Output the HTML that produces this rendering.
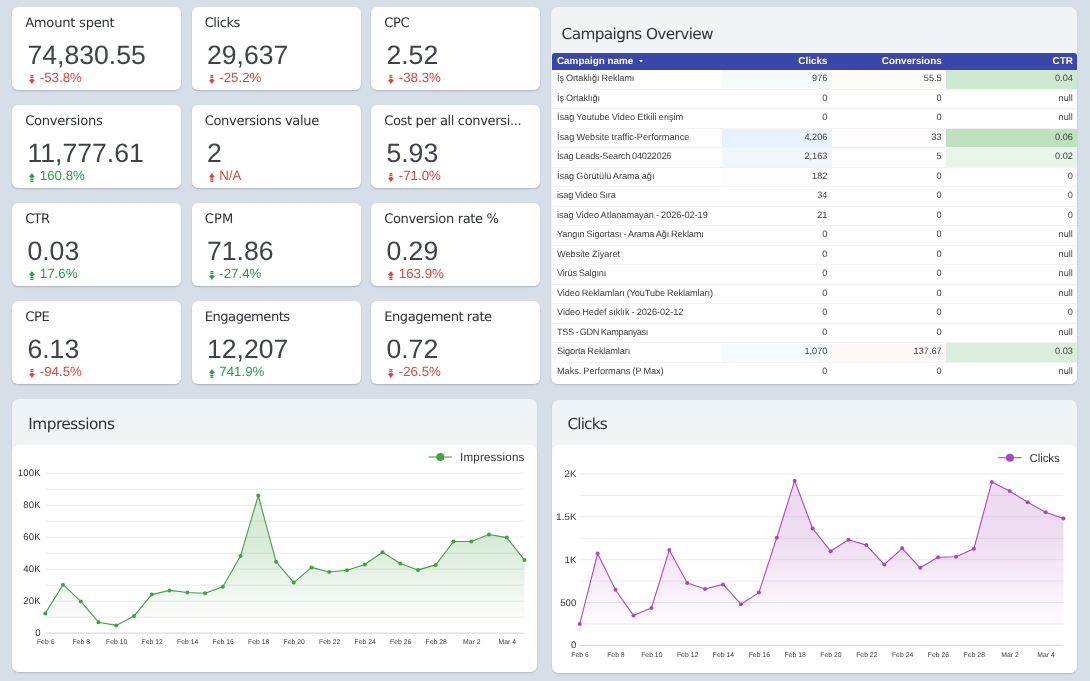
<!DOCTYPE html><html lang="tr"><head><meta charset="utf-8"><title>Campaigns dashboard</title><style>
*{box-sizing:border-box;margin:0;padding:0}
html,body{width:1090px;height:681px;overflow:hidden;background:#d6dee8;font-family:"Liberation Sans",sans-serif;text-rendering:geometricPrecision}
#root{position:absolute;left:0;top:0;width:1090px;height:681px;will-change:transform}
.abs{position:absolute}
.card{position:absolute;background:#fff;border-radius:6px;box-shadow:0 1px 1.5px rgba(70,76,88,.3)}
.kt{position:absolute;left:12.9px;top:8.5px;font-family:"DejaVu Sans",sans-serif;font-size:13.1px;line-height:16px;color:#2e3136;white-space:nowrap;letter-spacing:-.27px}
.kv{position:absolute;left:15.2px;top:33.3px;font-size:26.6px;line-height:30px;color:#3f4348;white-space:nowrap}
.kd{position:absolute;left:27.5px;top:63px;font-size:13.3px;line-height:15px;white-space:nowrap}
.ar{position:absolute;left:17.1px;top:67.8px;width:5.8px;height:8.3px}
.red{color:#dc463b;fill:#dc463b}
.green{color:#2f9e48;fill:#2f9e48}
.panel{position:absolute;background:#f0f4f7;border-radius:7px;box-shadow:0 1px 1.5px rgba(70,76,88,.26)}
.pt{position:absolute;font-family:"DejaVu Sans",sans-serif;font-size:15.3px;line-height:20px;color:#2e3136;white-space:nowrap;letter-spacing:-.62px}
.plot{position:absolute;background:#fff;border-radius:7px}
.th{position:absolute;background:#3b47a8;border-radius:3px 3px 0 0;color:#fff;font-weight:bold;font-size:9.9px;line-height:17.8px}
.th span{position:absolute;top:0;white-space:nowrap}
.tr{position:absolute;left:0;width:100%;background:#fff;border-bottom:1px solid #f1f3f5;font-size:9.2px;word-spacing:-.4px;color:#3c3c3c}
.tr span{position:absolute;top:0;white-space:nowrap}
.cell{position:absolute;top:0;height:100%}
svg text{font-family:"Liberation Sans",sans-serif}
</style></head><body><div id="root">
<div class="card" style="left:12.25px;top:7.00px;width:168.75px;height:83px"><div class="kt" style="letter-spacing:-0.24px">Amount spent</div><div class="kv">74,830.55</div><svg class="ar red" style="top:67.5px;height:9px" viewBox="0 0 7 9" preserveAspectRatio="none"><path d="M1.6 0 H5.4 V1.4 H1.6 Z M1.6 2 H5.4 V3.3 H1.6 Z M1.6 3.9 H5.4 V5.1 H7 L3.5 9 L0 5.1 H1.6 Z"/></svg><div class="kd red">-53.8%</div></div>
<div class="card" style="left:191.75px;top:7.00px;width:168.75px;height:83px"><div class="kt" style="letter-spacing:-0.455px">Clicks</div><div class="kv">29,637</div><svg class="ar red" style="top:67.5px;height:9px" viewBox="0 0 7 9" preserveAspectRatio="none"><path d="M1.6 0 H5.4 V1.4 H1.6 Z M1.6 2 H5.4 V3.3 H1.6 Z M1.6 3.9 H5.4 V5.1 H7 L3.5 9 L0 5.1 H1.6 Z"/></svg><div class="kd red">-25.2%</div></div>
<div class="card" style="left:371.25px;top:7.00px;width:168.75px;height:83px"><div class="kt" style="letter-spacing:-0.355px">CPC</div><div class="kv">2.52</div><svg class="ar red" style="top:67.5px;height:9px" viewBox="0 0 7 9" preserveAspectRatio="none"><path d="M1.6 0 H5.4 V1.4 H1.6 Z M1.6 2 H5.4 V3.3 H1.6 Z M1.6 3.9 H5.4 V5.1 H7 L3.5 9 L0 5.1 H1.6 Z"/></svg><div class="kd red">-38.3%</div></div>
<div class="card" style="left:12.25px;top:105.00px;width:168.75px;height:83px"><div class="kt" style="letter-spacing:-0.26px">Conversions</div><div class="kv">11,777.61</div><svg class="ar green" style="top:68.1px;height:9.2px" viewBox="0 0 7 9" preserveAspectRatio="none"><path d="M3.5 0 L7 3.9 H5.4 V5.1 H1.6 V3.9 H0 Z M1.6 5.7 H5.4 V7 H1.6 Z M1.6 7.6 H5.4 V9 H1.6 Z"/></svg><div class="kd green">160.8%</div></div>
<div class="card" style="left:191.75px;top:105.00px;width:168.75px;height:83px"><div class="kt" style="letter-spacing:-0.34px">Conversions value</div><div class="kv">2</div><svg class="ar red" style="top:68.1px;height:9.2px" viewBox="0 0 7 9" preserveAspectRatio="none"><path d="M3.5 0 L7 3.9 H5.4 V5.1 H1.6 V3.9 H0 Z M1.6 5.7 H5.4 V7 H1.6 Z M1.6 7.6 H5.4 V9 H1.6 Z"/></svg><div class="kd red">N/A</div></div>
<div class="card" style="left:371.25px;top:105.00px;width:168.75px;height:83px"><div class="kt" style="letter-spacing:-0.38px">Cost per all conversi...</div><div class="kv">5.93</div><svg class="ar red" style="top:67.5px;height:9px" viewBox="0 0 7 9" preserveAspectRatio="none"><path d="M1.6 0 H5.4 V1.4 H1.6 Z M1.6 2 H5.4 V3.3 H1.6 Z M1.6 3.9 H5.4 V5.1 H7 L3.5 9 L0 5.1 H1.6 Z"/></svg><div class="kd red">-71.0%</div></div>
<div class="card" style="left:12.25px;top:203.00px;width:168.75px;height:83px"><div class="kt" style="letter-spacing:-0.66px">CTR</div><div class="kv">0.03</div><svg class="ar green" style="top:68.1px;height:9.2px" viewBox="0 0 7 9" preserveAspectRatio="none"><path d="M3.5 0 L7 3.9 H5.4 V5.1 H1.6 V3.9 H0 Z M1.6 5.7 H5.4 V7 H1.6 Z M1.6 7.6 H5.4 V9 H1.6 Z"/></svg><div class="kd green">17.6%</div></div>
<div class="card" style="left:191.75px;top:203.00px;width:168.75px;height:83px"><div class="kt" style="letter-spacing:0.14px">CPM</div><div class="kv">71.86</div><svg class="ar green" style="top:67.5px;height:9px" viewBox="0 0 7 9" preserveAspectRatio="none"><path d="M1.6 0 H5.4 V1.4 H1.6 Z M1.6 2 H5.4 V3.3 H1.6 Z M1.6 3.9 H5.4 V5.1 H7 L3.5 9 L0 5.1 H1.6 Z"/></svg><div class="kd green">-27.4%</div></div>
<div class="card" style="left:371.25px;top:203.00px;width:168.75px;height:83px"><div class="kt" style="letter-spacing:-0.37px">Conversion rate %</div><div class="kv">0.29</div><svg class="ar red" style="top:68.1px;height:9.2px" viewBox="0 0 7 9" preserveAspectRatio="none"><path d="M3.5 0 L7 3.9 H5.4 V5.1 H1.6 V3.9 H0 Z M1.6 5.7 H5.4 V7 H1.6 Z M1.6 7.6 H5.4 V9 H1.6 Z"/></svg><div class="kd red">163.9%</div></div>
<div class="card" style="left:12.25px;top:301.00px;width:168.75px;height:83px"><div class="kt" style="letter-spacing:-0.4px">CPE</div><div class="kv">6.13</div><svg class="ar red" style="top:67.5px;height:9px" viewBox="0 0 7 9" preserveAspectRatio="none"><path d="M1.6 0 H5.4 V1.4 H1.6 Z M1.6 2 H5.4 V3.3 H1.6 Z M1.6 3.9 H5.4 V5.1 H7 L3.5 9 L0 5.1 H1.6 Z"/></svg><div class="kd red">-94.5%</div></div>
<div class="card" style="left:191.75px;top:301.00px;width:168.75px;height:83px"><div class="kt" style="letter-spacing:-0.48px">Engagements</div><div class="kv">12,207</div><svg class="ar green" style="top:68.1px;height:9.2px" viewBox="0 0 7 9" preserveAspectRatio="none"><path d="M3.5 0 L7 3.9 H5.4 V5.1 H1.6 V3.9 H0 Z M1.6 5.7 H5.4 V7 H1.6 Z M1.6 7.6 H5.4 V9 H1.6 Z"/></svg><div class="kd green">741.9%</div></div>
<div class="card" style="left:371.25px;top:301.00px;width:168.75px;height:83px"><div class="kt" style="letter-spacing:-0.45px">Engagement rate</div><div class="kv">0.72</div><svg class="ar red" style="top:67.5px;height:9px" viewBox="0 0 7 9" preserveAspectRatio="none"><path d="M1.6 0 H5.4 V1.4 H1.6 Z M1.6 2 H5.4 V3.3 H1.6 Z M1.6 3.9 H5.4 V5.1 H7 L3.5 9 L0 5.1 H1.6 Z"/></svg><div class="kd red">-26.5%</div></div>
<div class="panel" style="left:551.4px;top:7px;width:526.1px;height:377px;overflow:hidden">
<div class="pt" style="left:10.2px;top:17.1px">Campaigns Overview</div>
<div class="th" style="left:0.6px;top:46.3px;width:525.1px;height:16.3px"><span style="left:5px">Campaign name <svg width="4" height="2.4" viewBox="0 0 5 3" style="margin:0 0 2.2px 2.6px"><path d="M0 0H5L2.5 3Z" fill="#fff"/></svg></span><span style="right:249.7px">Clicks</span><span style="right:135.4px">Conversions</span><span style="right:4.2px">CTR</span></div>
<div class="abs" style="left:0.6px;top:63.0px;width:525.1px;height:314.0px;background:#fff">
<div class="tr" style="top:0.00px;height:19.50px;line-height:17.2px"><div class="cell" style="left:170.0px;width:109.7px;background:#f7fafd"></div><div class="cell" style="left:279.7px;width:114.3px;background:#fefbfb"></div><div class="cell" style="left:394.0px;width:131.1px;background:#cfe9d0"></div><span style="left:5px;letter-spacing:-0.131px">İş Ortaklığı Reklamı</span><span style="right:249.7px">976</span><span style="right:135.4px">55.5</span><span style="right:4.2px">0.04</span></div>
<div class="tr" style="top:19.50px;height:19.50px;line-height:17.2px"><span style="left:5px;letter-spacing:-0.094px">İş Ortaklığı</span><span style="right:249.7px">0</span><span style="right:135.4px">0</span><span style="right:4.2px">null</span></div>
<div class="tr" style="top:39.00px;height:19.50px;line-height:17.2px"><span style="left:5px;letter-spacing:-0.005px">İsag Youtube Video Etkili erişim</span><span style="right:249.7px">0</span><span style="right:135.4px">0</span><span style="right:4.2px">null</span></div>
<div class="tr" style="top:58.50px;height:19.50px;line-height:17.2px"><div class="cell" style="left:170.0px;width:109.7px;background:#e9f2fc"></div><div class="cell" style="left:279.7px;width:114.3px;background:#fefcfc"></div><div class="cell" style="left:394.0px;width:131.1px;background:#bfe1c0"></div><span style="left:5px;letter-spacing:-0.008px">İsag Website traffic-Performance</span><span style="right:249.7px">4,206</span><span style="right:135.4px">33</span><span style="right:4.2px">0.06</span></div>
<div class="tr" style="top:78.00px;height:19.50px;line-height:17.2px"><div class="cell" style="left:170.0px;width:109.7px;background:#f1f6fc"></div><div class="cell" style="left:394.0px;width:131.1px;background:#e9f5ea"></div><span style="left:5px;letter-spacing:-0.213px">İsag Leads-Search 04022026</span><span style="right:249.7px">2,163</span><span style="right:135.4px">5</span><span style="right:4.2px">0.02</span></div>
<div class="tr" style="top:97.50px;height:19.50px;line-height:17.2px"><div class="cell" style="left:170.0px;width:109.7px;background:#fcfdfe"></div><span style="left:5px;letter-spacing:-0.04px">İsag Görütülü Arama ağı</span><span style="right:249.7px">182</span><span style="right:135.4px">0</span><span style="right:4.2px">0</span></div>
<div class="tr" style="top:117.00px;height:19.50px;line-height:17.2px"><span style="left:5px;letter-spacing:-0.185px">isag Video Sıra</span><span style="right:249.7px">34</span><span style="right:135.4px">0</span><span style="right:4.2px">0</span></div>
<div class="tr" style="top:136.50px;height:19.50px;line-height:17.2px"><span style="left:5px;letter-spacing:-0.035px">isag Video Atlanamayan - 2026-02-19</span><span style="right:249.7px">21</span><span style="right:135.4px">0</span><span style="right:4.2px">0</span></div>
<div class="tr" style="top:156.00px;height:19.50px;line-height:17.2px"><span style="left:5px;letter-spacing:-0.147px">Yangın Sigortası - Arama Ağı Reklamı</span><span style="right:249.7px">0</span><span style="right:135.4px">0</span><span style="right:4.2px">null</span></div>
<div class="tr" style="top:175.50px;height:19.50px;line-height:17.2px"><span style="left:5px;letter-spacing:-0.012px">Website Ziyaret</span><span style="right:249.7px">0</span><span style="right:135.4px">0</span><span style="right:4.2px">null</span></div>
<div class="tr" style="top:195.00px;height:19.50px;line-height:17.2px"><span style="left:5px;letter-spacing:-0.191px">Virüs Salgını</span><span style="right:249.7px">0</span><span style="right:135.4px">0</span><span style="right:4.2px">null</span></div>
<div class="tr" style="top:214.50px;height:19.50px;line-height:17.2px"><span style="left:5px;letter-spacing:-0.106px">Video Reklamları (YouTube Reklamları)</span><span style="right:249.7px">0</span><span style="right:135.4px">0</span><span style="right:4.2px">null</span></div>
<div class="tr" style="top:234.00px;height:19.50px;line-height:17.2px"><span style="left:5px;letter-spacing:-0.035px">Video Hedef sıklık - 2026-02-12</span><span style="right:249.7px">0</span><span style="right:135.4px">0</span><span style="right:4.2px">0</span></div>
<div class="tr" style="top:253.50px;height:19.50px;line-height:17.2px"><span style="left:5px;letter-spacing:-0.397px">TSS - GDN Kampanyası</span><span style="right:249.7px">0</span><span style="right:135.4px">0</span><span style="right:4.2px">null</span></div>
<div class="tr" style="top:273.00px;height:19.50px;line-height:17.2px"><div class="cell" style="left:170.0px;width:109.7px;background:#f7fafd"></div><div class="cell" style="left:279.7px;width:114.3px;background:#fdf7f7"></div><div class="cell" style="left:394.0px;width:131.1px;background:#dbeedb"></div><span style="left:5px;letter-spacing:-0.111px">Sigorta Reklamları</span><span style="right:249.7px">1,070</span><span style="right:135.4px">137.67</span><span style="right:4.2px">0.03</span></div>
<div class="tr" style="top:292.50px;height:19.50px;line-height:17.2px;border-bottom:0"><span style="left:5px;letter-spacing:-0.052px">Maks. Performans (P Max)</span><span style="right:249.7px">0</span><span style="right:135.4px">0</span><span style="right:4.2px">null</span></div>
</div></div>
<div class="panel" style="left:12.4px;top:398.9px;width:524.9px;height:273.1px"><div class="pt" style="left:15.9px;top:15.60px;letter-spacing:-0.5px">Impressions</div><div class="plot" style="left:0;top:45.9px;width:524.9px;height:227.20000000000002px"></div><svg class="abs" style="left:-12.4px;top:-398.9px;overflow:visible" width="1090" height="681" viewBox="0 0 1090 681"><defs><linearGradient id="gi" gradientUnits="userSpaceOnUse" x1="0" y1="495.5" x2="0" y2="625.4"><stop offset="0" stop-color="#43a047" stop-opacity="0.22"/><stop offset=".38" stop-color="#43a047" stop-opacity="0.202"/><stop offset="1" stop-color="#43a047" stop-opacity="0"/></linearGradient></defs><line x1="45.3" x2="524.5" y1="617.10" y2="617.10" stroke="#e8eaec" stroke-width="1"/><line x1="45.3" x2="524.5" y1="601.10" y2="601.10" stroke="#e8eaec" stroke-width="1"/><line x1="45.3" x2="524.5" y1="585.10" y2="585.10" stroke="#e8eaec" stroke-width="1"/><line x1="45.3" x2="524.5" y1="569.10" y2="569.10" stroke="#e8eaec" stroke-width="1"/><line x1="45.3" x2="524.5" y1="553.10" y2="553.10" stroke="#e8eaec" stroke-width="1"/><line x1="45.3" x2="524.5" y1="537.10" y2="537.10" stroke="#e8eaec" stroke-width="1"/><line x1="45.3" x2="524.5" y1="521.10" y2="521.10" stroke="#e8eaec" stroke-width="1"/><line x1="45.3" x2="524.5" y1="505.10" y2="505.10" stroke="#e8eaec" stroke-width="1"/><line x1="45.3" x2="524.5" y1="489.10" y2="489.10" stroke="#e8eaec" stroke-width="1"/><line x1="45.3" x2="524.5" y1="473.10" y2="473.10" stroke="#e8eaec" stroke-width="1"/><line x1="45.3" x2="524.5" y1="633.10" y2="633.10" stroke="#cdd2d8" stroke-width="1"/><polygon points="45.3,633.1 45.3,613.4 63.0,584.7 80.8,601.4 98.5,622.2 116.3,625.4 134.0,615.9 151.8,594.6 169.5,590.4 187.3,592.5 205.0,593.2 222.8,586.8 240.5,556.1 258.3,495.5 276.0,561.7 293.8,582.6 311.5,567.4 329.3,572.0 347.0,570.2 364.8,564.5 382.5,552.2 400.3,563.5 418.0,569.9 435.8,564.9 453.5,541.5 471.3,541.5 489.0,534.5 506.8,537.6 524.5,559.9 524.5,633.1" fill="url(#gi)"/><polyline points="45.3,613.4 63.0,584.7 80.8,601.4 98.5,622.2 116.3,625.4 134.0,615.9 151.8,594.6 169.5,590.4 187.3,592.5 205.0,593.2 222.8,586.8 240.5,556.1 258.3,495.5 276.0,561.7 293.8,582.6 311.5,567.4 329.3,572.0 347.0,570.2 364.8,564.5 382.5,552.2 400.3,563.5 418.0,569.9 435.8,564.9 453.5,541.5 471.3,541.5 489.0,534.5 506.8,537.6 524.5,559.9" fill="none" stroke="#43a047" stroke-width="1.1" stroke-linejoin="round"/><circle cx="45.3" cy="613.4" r="2" fill="#43a047"/><circle cx="63.0" cy="584.7" r="2" fill="#43a047"/><circle cx="80.8" cy="601.4" r="2" fill="#43a047"/><circle cx="98.5" cy="622.2" r="2" fill="#43a047"/><circle cx="116.3" cy="625.4" r="2" fill="#43a047"/><circle cx="134.0" cy="615.9" r="2" fill="#43a047"/><circle cx="151.8" cy="594.6" r="2" fill="#43a047"/><circle cx="169.5" cy="590.4" r="2" fill="#43a047"/><circle cx="187.3" cy="592.5" r="2" fill="#43a047"/><circle cx="205.0" cy="593.2" r="2" fill="#43a047"/><circle cx="222.8" cy="586.8" r="2" fill="#43a047"/><circle cx="240.5" cy="556.1" r="2" fill="#43a047"/><circle cx="258.3" cy="495.5" r="2" fill="#43a047"/><circle cx="276.0" cy="561.7" r="2" fill="#43a047"/><circle cx="293.8" cy="582.6" r="2" fill="#43a047"/><circle cx="311.5" cy="567.4" r="2" fill="#43a047"/><circle cx="329.3" cy="572.0" r="2" fill="#43a047"/><circle cx="347.0" cy="570.2" r="2" fill="#43a047"/><circle cx="364.8" cy="564.5" r="2" fill="#43a047"/><circle cx="382.5" cy="552.2" r="2" fill="#43a047"/><circle cx="400.3" cy="563.5" r="2" fill="#43a047"/><circle cx="418.0" cy="569.9" r="2" fill="#43a047"/><circle cx="435.8" cy="564.9" r="2" fill="#43a047"/><circle cx="453.5" cy="541.5" r="2" fill="#43a047"/><circle cx="471.3" cy="541.5" r="2" fill="#43a047"/><circle cx="489.0" cy="534.5" r="2" fill="#43a047"/><circle cx="506.8" cy="537.6" r="2" fill="#43a047"/><circle cx="524.5" cy="559.9" r="2" fill="#43a047"/><text x="40.7" y="636.1" text-anchor="end" font-size="9.6" fill="#333" letter-spacing=".12">0</text><text x="40.7" y="604.1" text-anchor="end" font-size="9.6" fill="#333" letter-spacing=".12">20K</text><text x="40.7" y="572.1" text-anchor="end" font-size="9.6" fill="#333" letter-spacing=".12">40K</text><text x="40.7" y="540.1" text-anchor="end" font-size="9.6" fill="#333" letter-spacing=".12">60K</text><text x="40.7" y="508.1" text-anchor="end" font-size="9.6" fill="#333" letter-spacing=".12">80K</text><text x="40.7" y="476.1" text-anchor="end" font-size="9.6" fill="#333" letter-spacing=".12">100K</text><text x="45.7" y="644.3" text-anchor="middle" font-size="6.8" fill="#3a3a3a" letter-spacing=".02">Feb 6</text><text x="81.2" y="644.3" text-anchor="middle" font-size="6.8" fill="#3a3a3a" letter-spacing=".02">Feb 8</text><text x="116.7" y="644.3" text-anchor="middle" font-size="6.8" fill="#3a3a3a" letter-spacing=".02">Feb 10</text><text x="152.2" y="644.3" text-anchor="middle" font-size="6.8" fill="#3a3a3a" letter-spacing=".02">Feb 12</text><text x="187.7" y="644.3" text-anchor="middle" font-size="6.8" fill="#3a3a3a" letter-spacing=".02">Feb 14</text><text x="223.2" y="644.3" text-anchor="middle" font-size="6.8" fill="#3a3a3a" letter-spacing=".02">Feb 16</text><text x="258.7" y="644.3" text-anchor="middle" font-size="6.8" fill="#3a3a3a" letter-spacing=".02">Feb 18</text><text x="294.2" y="644.3" text-anchor="middle" font-size="6.8" fill="#3a3a3a" letter-spacing=".02">Feb 20</text><text x="329.7" y="644.3" text-anchor="middle" font-size="6.8" fill="#3a3a3a" letter-spacing=".02">Feb 22</text><text x="365.2" y="644.3" text-anchor="middle" font-size="6.8" fill="#3a3a3a" letter-spacing=".02">Feb 24</text><text x="400.7" y="644.3" text-anchor="middle" font-size="6.8" fill="#3a3a3a" letter-spacing=".02">Feb 26</text><text x="436.2" y="644.3" text-anchor="middle" font-size="6.8" fill="#3a3a3a" letter-spacing=".02">Feb 28</text><text x="471.7" y="644.3" text-anchor="middle" font-size="6.8" fill="#3a3a3a" letter-spacing=".02">Mar 2</text><text x="507.2" y="644.3" text-anchor="middle" font-size="6.8" fill="#3a3a3a" letter-spacing=".02">Mar 4</text><line x1="428.5" x2="451.9" y1="457" y2="457" stroke="#43a047" stroke-width="1.1"/><circle cx="440.2" cy="457" r="4" fill="#43a047"/><text x="460" y="461.1" font-size="11.6" fill="#333" letter-spacing="0.19">Impressions</text></svg></div>
<div class="panel" style="left:551.9px;top:400.4px;width:525.4px;height:272.5px"><div class="pt" style="left:15.6px;top:14.10px;letter-spacing:-0.85px">Clicks</div><div class="plot" style="left:0;top:44.9px;width:525.4px;height:227.6px"></div><svg class="abs" style="left:-551.9px;top:-400.4px;overflow:visible" width="1090" height="681" viewBox="0 0 1090 681"><defs><linearGradient id="gc" gradientUnits="userSpaceOnUse" x1="0" y1="480.7" x2="0" y2="632.1"><stop offset="0" stop-color="#ab47bc" stop-opacity="0.2"/><stop offset=".38" stop-color="#ab47bc" stop-opacity="0.184"/><stop offset="1" stop-color="#ab47bc" stop-opacity="0"/></linearGradient></defs><line x1="579.7" x2="1063.5" y1="623.89" y2="623.89" stroke="#e8eaec" stroke-width="1"/><line x1="579.7" x2="1063.5" y1="602.48" y2="602.48" stroke="#e8eaec" stroke-width="1"/><line x1="579.7" x2="1063.5" y1="581.07" y2="581.07" stroke="#e8eaec" stroke-width="1"/><line x1="579.7" x2="1063.5" y1="559.66" y2="559.66" stroke="#e8eaec" stroke-width="1"/><line x1="579.7" x2="1063.5" y1="538.25" y2="538.25" stroke="#e8eaec" stroke-width="1"/><line x1="579.7" x2="1063.5" y1="516.84" y2="516.84" stroke="#e8eaec" stroke-width="1"/><line x1="579.7" x2="1063.5" y1="495.43" y2="495.43" stroke="#e8eaec" stroke-width="1"/><line x1="579.7" x2="1063.5" y1="474.02" y2="474.02" stroke="#e8eaec" stroke-width="1"/><line x1="579.7" x2="1063.5" y1="645.30" y2="645.30" stroke="#cdd2d8" stroke-width="1"/><polygon points="579.7,645.3 579.7,624.1 597.6,553.6 615.5,589.7 633.5,615.6 651.4,608.1 669.3,550.1 687.2,583.0 705.1,589.0 723.0,584.4 741.0,604.2 758.9,592.6 776.8,537.7 794.7,480.7 812.6,528.5 830.6,551.2 848.5,539.8 866.4,545.1 884.3,564.6 902.2,548.3 920.2,567.8 938.1,557.2 956.0,556.8 973.9,548.7 991.8,482.1 1009.7,491.0 1027.7,502.3 1045.6,512.2 1063.5,518.6 1063.5,645.3" fill="url(#gc)"/><polyline points="579.7,624.1 597.6,553.6 615.5,589.7 633.5,615.6 651.4,608.1 669.3,550.1 687.2,583.0 705.1,589.0 723.0,584.4 741.0,604.2 758.9,592.6 776.8,537.7 794.7,480.7 812.6,528.5 830.6,551.2 848.5,539.8 866.4,545.1 884.3,564.6 902.2,548.3 920.2,567.8 938.1,557.2 956.0,556.8 973.9,548.7 991.8,482.1 1009.7,491.0 1027.7,502.3 1045.6,512.2 1063.5,518.6" fill="none" stroke="#ab47bc" stroke-width="1.1" stroke-linejoin="round"/><circle cx="579.7" cy="624.1" r="2" fill="#ab47bc"/><circle cx="597.6" cy="553.6" r="2" fill="#ab47bc"/><circle cx="615.5" cy="589.7" r="2" fill="#ab47bc"/><circle cx="633.5" cy="615.6" r="2" fill="#ab47bc"/><circle cx="651.4" cy="608.1" r="2" fill="#ab47bc"/><circle cx="669.3" cy="550.1" r="2" fill="#ab47bc"/><circle cx="687.2" cy="583.0" r="2" fill="#ab47bc"/><circle cx="705.1" cy="589.0" r="2" fill="#ab47bc"/><circle cx="723.0" cy="584.4" r="2" fill="#ab47bc"/><circle cx="741.0" cy="604.2" r="2" fill="#ab47bc"/><circle cx="758.9" cy="592.6" r="2" fill="#ab47bc"/><circle cx="776.8" cy="537.7" r="2" fill="#ab47bc"/><circle cx="794.7" cy="480.7" r="2" fill="#ab47bc"/><circle cx="812.6" cy="528.5" r="2" fill="#ab47bc"/><circle cx="830.6" cy="551.2" r="2" fill="#ab47bc"/><circle cx="848.5" cy="539.8" r="2" fill="#ab47bc"/><circle cx="866.4" cy="545.1" r="2" fill="#ab47bc"/><circle cx="884.3" cy="564.6" r="2" fill="#ab47bc"/><circle cx="902.2" cy="548.3" r="2" fill="#ab47bc"/><circle cx="920.2" cy="567.8" r="2" fill="#ab47bc"/><circle cx="938.1" cy="557.2" r="2" fill="#ab47bc"/><circle cx="956.0" cy="556.8" r="2" fill="#ab47bc"/><circle cx="973.9" cy="548.7" r="2" fill="#ab47bc"/><circle cx="991.8" cy="482.1" r="2" fill="#ab47bc"/><circle cx="1009.7" cy="491.0" r="2" fill="#ab47bc"/><circle cx="1027.7" cy="502.3" r="2" fill="#ab47bc"/><circle cx="1045.6" cy="512.2" r="2" fill="#ab47bc"/><circle cx="1063.5" cy="518.6" r="2" fill="#ab47bc"/><text x="576.5" y="648.3" text-anchor="end" font-size="9.6" fill="#333" letter-spacing=".12">0</text><text x="576.5" y="605.5" text-anchor="end" font-size="9.6" fill="#333" letter-spacing=".12">500</text><text x="576.5" y="562.6" text-anchor="end" font-size="9.6" fill="#333" letter-spacing=".12">1K</text><text x="576.5" y="519.8" text-anchor="end" font-size="9.6" fill="#333" letter-spacing=".12">1.5K</text><text x="576.5" y="477.0" text-anchor="end" font-size="9.6" fill="#333" letter-spacing=".12">2K</text><text x="580.1" y="657.3" text-anchor="middle" font-size="6.8" fill="#3a3a3a" letter-spacing=".02">Feb 6</text><text x="615.9" y="657.3" text-anchor="middle" font-size="6.8" fill="#3a3a3a" letter-spacing=".02">Feb 8</text><text x="651.8" y="657.3" text-anchor="middle" font-size="6.8" fill="#3a3a3a" letter-spacing=".02">Feb 10</text><text x="687.6" y="657.3" text-anchor="middle" font-size="6.8" fill="#3a3a3a" letter-spacing=".02">Feb 12</text><text x="723.4" y="657.3" text-anchor="middle" font-size="6.8" fill="#3a3a3a" letter-spacing=".02">Feb 14</text><text x="759.3" y="657.3" text-anchor="middle" font-size="6.8" fill="#3a3a3a" letter-spacing=".02">Feb 16</text><text x="795.1" y="657.3" text-anchor="middle" font-size="6.8" fill="#3a3a3a" letter-spacing=".02">Feb 18</text><text x="831.0" y="657.3" text-anchor="middle" font-size="6.8" fill="#3a3a3a" letter-spacing=".02">Feb 20</text><text x="866.8" y="657.3" text-anchor="middle" font-size="6.8" fill="#3a3a3a" letter-spacing=".02">Feb 22</text><text x="902.6" y="657.3" text-anchor="middle" font-size="6.8" fill="#3a3a3a" letter-spacing=".02">Feb 24</text><text x="938.5" y="657.3" text-anchor="middle" font-size="6.8" fill="#3a3a3a" letter-spacing=".02">Feb 26</text><text x="974.3" y="657.3" text-anchor="middle" font-size="6.8" fill="#3a3a3a" letter-spacing=".02">Feb 28</text><text x="1010.1" y="657.3" text-anchor="middle" font-size="6.8" fill="#3a3a3a" letter-spacing=".02">Mar 2</text><text x="1046.0" y="657.3" text-anchor="middle" font-size="6.8" fill="#3a3a3a" letter-spacing=".02">Mar 4</text><line x1="998" x2="1021.7" y1="457.7" y2="457.7" stroke="#ab47bc" stroke-width="1.1"/><circle cx="1010" cy="457.7" r="4" fill="#ab47bc"/><text x="1029.5" y="461.8" font-size="11.6" fill="#333" letter-spacing="-0.12">Clicks</text></svg></div>
</div></body></html>
